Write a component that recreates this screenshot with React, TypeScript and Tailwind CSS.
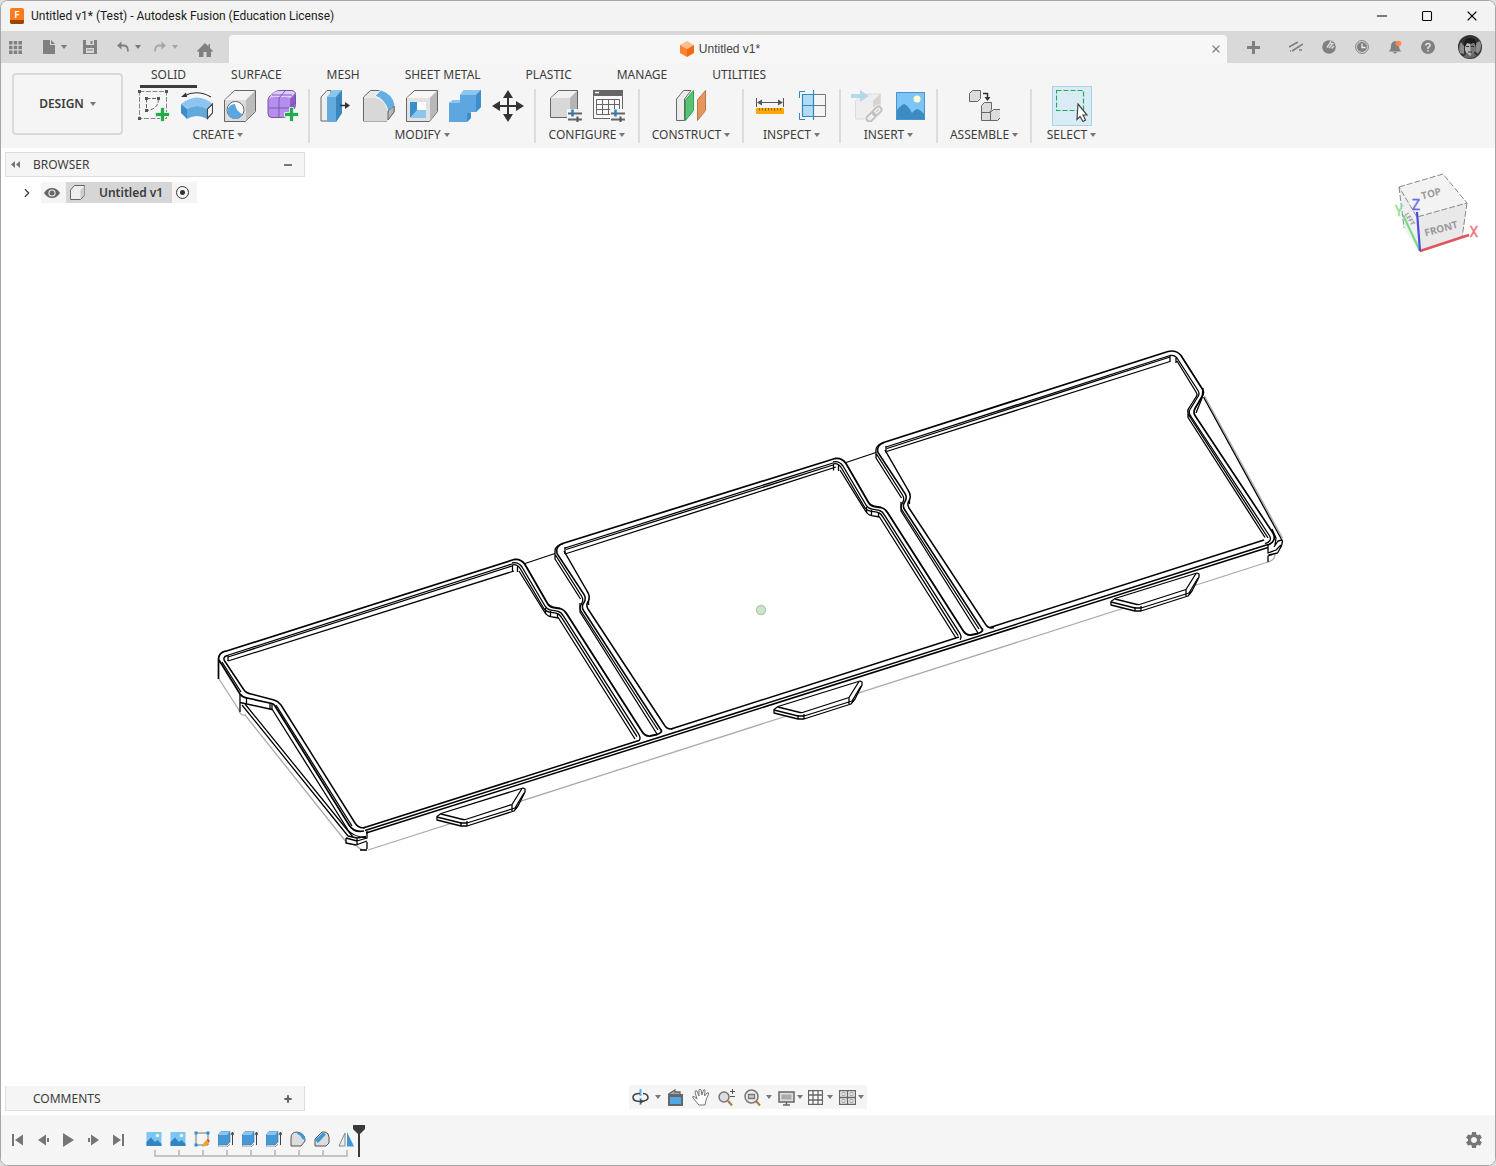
import React from 'react';
import { X, Plus, Minus, Square, ChevronRight } from 'lucide-react';
import { MdSettings } from 'react-icons/md';

interface IconProps {
  className?: string;
}

interface ToolGroup {
  label: string;
  width: string;
  tools: { name: string; icon: React.ReactNode }[];
}

const Caret: React.FC<IconProps> = ({ className = 'text-[#777]' }) => (
  <svg viewBox="0 0 6 4" className={`h-1 w-1.5 shrink-0 ${className}`} aria-hidden="true">
    <path d="M0 0h6L3 4z" fill="currentColor" />
  </svg>
);

const Icon32: React.FC<{ children: React.ReactNode }> = ({ children }) => (
  <svg viewBox="0 0 32 32" className="size-8 shrink-0" fill="none" aria-hidden="true">
    {children}
  </svg>
);

/* ---------- ribbon icons ---------- */

const GreenPlus = () => (
  <path d="M22.500 17.500h4v5h5v4h-5v5h-4v-5h-5v-4h5z" fill="#23ac4c" stroke="#f5f5f5" strokeWidth="0.800" />
);

const SketchIcon = () => (
  <Icon32>
    <path d="M1.500 1.500h27v27h-27z" stroke="#888" strokeDasharray="5 1.500" />
    <path d="M8.500 8.500h12M8.500 8.500v12M20.500 8.500q0 11-12 12" stroke="#666" strokeDasharray="4 1.500" />
    <path d="M0 0h3v3H0zM27 0h3v3h-3zM0 27h3v3H0zM7 7h3v3H7zM19 7h3v3h-3zM7 19h3v3H7z" fill="#555" />
    <GreenPlus />
  </Icon32>
);

const RevolveIcon = () => (
  <Icon32>
    <path d="M3 6Q16-1 30 7" stroke="#333" strokeWidth="1.200" />
    <path d="M0 7l5-4.500 1 4.500z" fill="#333" />
    <path d="M0 14Q16 1 32 14l-6 5q-10-6-20 0z" fill="#8cc6ef" />
    <path d="M0 14l6 5v10l-6-6z" fill="#3a8fcb" />
    <path d="M6 19q10-6 20 0v10q-10-6-20 0z" fill="#60a9dd" />
    <path d="M26.500 19l5-5v9l-5 5.500z" fill="#fff" stroke="#444" strokeWidth="1.200" />
  </Icon32>
);

const HoleIcon = () => (
  <Icon32>
    <path d="M.5 10l10-9.500h21v21l-10 10H.5z" fill="#dcdcdc" stroke="#666" />
    <path d="M1 10L11 1h20l-9.500 9z" fill="#f4f4f4" />
    <path d="M22 10l9-9v20l-9 10z" fill="#bcbcbc" />
    <circle cx="11.500" cy="20" r="8.500" fill="#fff" stroke="#666" />
    <path d="M11 14q1 7 7 10a7.500 7.500 0 1 1-7-10z" fill="#5aa7df" />
  </Icon32>
);

const FormIcon = () => (
  <Icon32>
    <path d="M1 10Q1 7 4 5l4-3q2-1.500 5-1.500h11q4.500 0 4.500 4v10q0 4-3 6l-5 5q-2 2-5 2H5q-4 0-4-4z" fill="#b68df0" stroke="#78559f" />
    <path d="M4 5l4-3q2-1 5-1h11q3 0 4 2l-5 5q-2-1-5-1H7q-3 0-5 2z" fill="#e0cdfb" />
    <path d="M23 9l5-5v11q0 4-3 6l-4 4q2-2 2-6z" fill="#8b5fc4" />
    <path d="M12 8v19M2 18h20l6-6M12 8l6-7M5 5h20" stroke="#7d5aaa" />
    <GreenPlus />
  </Icon32>
);

const PressPullIcon = () => (
  <Icon32>
    <path d="M1 7l6-6.500h4V31H1z" fill="#eee" stroke="#666" />
    <path d="M7 7l6-7h9v23l-6 9H7z" fill="#62aae0" />
    <path d="M7 7l6-7h9l-6 7z" fill="#8cc6ef" />
    <path d="M16 7l6-7v23l-6 9z" fill="#3b86bf" />
    <path d="M20 15.500h7" stroke="#333" strokeWidth="1.500" />
    <path d="M25 12l5 3.500-5 3.500z" fill="#333" />
  </Icon32>
);

const FilletIcon = () => (
  <Icon32>
    <path d="M.5 7l7-6.500H15q11 2 16 15V22l-7 9H.5z" fill="#e9e9e9" stroke="#666" />
    <path d="M1 8h11q10 1 13 13v10H1z" fill="#d8d8d8" />
    <path d="M12 6l6-6q12 4 14 15l-7 6Q22 9 12 6z" fill="#65aee2" stroke="#fff" strokeWidth="0.800" />
    <path d="M25 21l6-5v6l-6 8z" fill="#b9b9b9" stroke="#666" />
  </Icon32>
);

const ShellIcon = () => (
  <Icon32>
    <path d="M.5 8l8-7.500h23v21l-8 10H.5z" fill="#e2e2e2" stroke="#666" />
    <path d="M1 8l8-7h22l-8 7z" fill="#f6f6f6" />
    <path d="M24 8l7-7v20l-7 10z" fill="#b8b8b8" />
    <path d="M4 12h16v16H4z" fill="#fff" />
    <path d="M4 12h7v9l-7 7z" fill="#3a8fcb" />
    <path d="M11 20h9v8H4z" fill="#8cc6ef" />
  </Icon32>
);

const CombineIcon = () => (
  <Icon32>
    <path d="M0 13l4-3h7V5l4-5h17v17l-5 5h-5v6l-4 4H0z" fill="#5da6df" />
    <path d="M11 5l4-5h17l-5 5zM0 13l4-3h7v3z" fill="#8cc6ef" />
    <path d="M27 5l5-5v17l-5 5zM18 23h4v5l-4 4z" fill="#3f8ecb" />
  </Icon32>
);

const MoveIcon = () => (
  <Icon32>
    <path d="M16 4v24M4 16h24" stroke="#333" strokeWidth="2" />
    <path d="M16 0l5 8H11zM16 32l5-8H11zM0 16l8-5v10zM32 16l-8-5v10z" fill="#333" />
  </Icon32>
);

const Sliders = () => (
  <>
    <path d="M17 19h16v14H17z" fill="#f5f5f5" />
    <path d="M18 23.500h14M18 29.500h14" stroke="#666" strokeWidth="1.800" />
    <path d="M22.500 19.500v7" stroke="#1d84c8" strokeWidth="2.500" />
    <path d="M27.500 26.500v6" stroke="#555" strokeWidth="2" />
  </>
);

const ConfigureIcon = () => (
  <Icon32>
    <path d="M.5 8l8-7.500h19v19l-7 8H.5z" fill="#d8d8d8" stroke="#666" />
    <path d="M1 8l8-7h18l-7 7z" fill="#f1f1f1" />
    <path d="M20 8l7-7v19l-7 7z" fill="#b5b5b8" />
    <Sliders />
  </Icon32>
);

const ConfigTableIcon = () => (
  <Icon32>
    <path d="M.5.5h29v28H.5z" fill="#fafafa" stroke="#666" />
    <path d="M0 0h30v6H0z" fill="#666" />
    <path d="M2 2.500h4" stroke="#fff" strokeWidth="1.500" />
    <path d="M3.500 9.500h23v15h-23zM3.500 14.500h23M3.500 19.500h23M9.500 9.500v15M15.500 9.500v15M21.500 9.500v15" stroke="#666" />
    <Sliders />
  </Icon32>
);

const PlaneIcon = () => (
  <Icon32>
    <path d="M1.500 9l7-8.500H16L9.500 9v21.500h-8z" fill="#ececec" stroke="#666" />
    <path d="M10.500 10l8-9.500v20l-8 10z" fill="#57c374" stroke="#35a355" />
    <path d="M22.500 10l8-9.500v20l-8 10z" fill="#e6955d" stroke="#b9784c" />
  </Icon32>
);

const MeasureIcon = () => (
  <Icon32>
    <path d="M2.500 8v9M29.500 8v9M4 12.500h24" stroke="#555" />
    <path d="M3 12.500l5-3v6zM29 12.500l-5-3v6z" fill="#555" />
    <path d="M2 18h28v6H2z" fill="#fba800" />
    <path d="M5.500 18v2.500M8.500 18v2.500M11.500 18v3M14.500 18v2.500M17.500 18v2.500M20.500 18v3M23.500 18v2.500M26.500 18v2.500" stroke="#8e651a" />
  </Icon32>
);

const SectionIcon = () => (
  <Icon32>
    <path d="M5 4h11v22H5z" fill="#b4d9f2" />
    <path d="M16.500 4.500h12v22h-12M16 15.500h12.500" stroke="#777" />
    <path d="M5 4.500h11M5 15.500h11M5 26.500h11M5.500 4v22M16.500 0v30" stroke="#2a8ac4" strokeWidth="1.200" />
    <path d="M8 1.500H2.500V8M8 29.500H2.500V23" stroke="#2a8ac4" />
  </Icon32>
);

const DeriveIcon = () => (
  <Icon32>
    <path d="M4.500 11l8-7h17v17l-7 8h-18z" fill="#eee" stroke="#ddd" />
    <path d="M22 11l7-7v17l-7 8z" fill="#d5d5d5" />
    <path d="M0 4h9V0l9 6-9 6V8H0z" fill="#b6d9ea" />
    <g fill="none" stroke="#f5f5f5" strokeWidth="4">
      <rect x="15" y="24" width="10" height="6" rx="3" transform="rotate(-45 20 27)" />
      <rect x="21" y="18" width="10" height="6" rx="3" transform="rotate(-45 26 21)" />
    </g>
    <g fill="none" stroke="#c2c2c2" strokeWidth="2">
      <rect x="15" y="24" width="10" height="6" rx="3" transform="rotate(-45 20 27)" />
      <rect x="21" y="18" width="10" height="6" rx="3" transform="rotate(-45 26 21)" />
    </g>
  </Icon32>
);

const ImageIcon = () => (
  <Icon32>
    <path d="M2 2h29v28H2z" fill="#7cc5f6" />
    <circle cx="23" cy="9" r="3.500" fill="#fffcd1" />
    <path d="M2 21q5-6 8-7 4 1 8 9 2-3 5-4 4 1 8 6v5H2z" fill="#3c8cc4" />
    <path d="M2.500 2.500h28v27h-28z" stroke="#4c93c8" />
  </Icon32>
);

const AssembleIcon = () => (
  <Icon32>
    <g fill="#dcdcdc" stroke="#666">
      <path d="M1.500 3.500l3-3h8v8l-3 3h-8zM13.500 15.500l3-3h7v7l-2 3h-8zM13.500 22.500h9v8h-9zM22.500 22.500l3-3h7v8l-3 3h-7z" />
    </g>
    <path d="M15 3.500h4.500V8" stroke="#333" strokeWidth="1.500" />
    <path d="M16.500 7h6l-3 4z" fill="#333" />
  </Icon32>
);

const SelectIcon = () => (
  <Icon32>
    <path d="M.5.500h27v20H.5z" stroke="#28a55a" strokeDasharray="5 2" strokeWidth="1.200" />
    <path d="M22 14l9 11h-4l2.500 5-2.500 1.500-3-5-3 3z" fill="#fff" stroke="#444" strokeWidth="1.200" />
  </Icon32>
);

const groups: ToolGroup[] = [
  {
    label: 'CREATE',
    width: 'w-[182px]',
    tools: [
      { name: 'Create Sketch', icon: <SketchIcon /> },
      { name: 'Revolve', icon: <RevolveIcon /> },
      { name: 'Hole', icon: <HoleIcon /> },
      { name: 'Create Form', icon: <FormIcon /> },
    ],
  },
  {
    label: 'MODIFY',
    width: 'w-[226px]',
    tools: [
      { name: 'Press Pull', icon: <PressPullIcon /> },
      { name: 'Fillet', icon: <FilletIcon /> },
      { name: 'Shell', icon: <ShellIcon /> },
      { name: 'Combine', icon: <CombineIcon /> },
      { name: 'Move', icon: <MoveIcon /> },
    ],
  },
  {
    label: 'CONFIGURE',
    width: 'w-[104px]',
    tools: [
      { name: 'Configure', icon: <ConfigureIcon /> },
      { name: 'Configuration Table', icon: <ConfigTableIcon /> },
    ],
  },
  { label: 'CONSTRUCT', width: 'w-[104px]', tools: [{ name: 'Offset Plane', icon: <PlaneIcon /> }] },
  {
    label: 'INSPECT',
    width: 'w-[97px]',
    tools: [
      { name: 'Measure', icon: <MeasureIcon /> },
      { name: 'Section Analysis', icon: <SectionIcon /> },
    ],
  },
  {
    label: 'INSERT',
    width: 'w-[97px]',
    tools: [
      { name: 'Derive', icon: <DeriveIcon /> },
      { name: 'Canvas', icon: <ImageIcon /> },
    ],
  },
  { label: 'ASSEMBLE', width: 'w-[94px]', tools: [{ name: 'New Component', icon: <AssembleIcon /> }] },
  { label: 'SELECT', width: 'w-[79px]', tools: [{ name: 'Select', icon: <SelectIcon /> }] },
];

const ribbonTabs = ['SOLID', 'SURFACE', 'MESH', 'SHEET METAL', 'PLASTIC', 'MANAGE', 'UTILITIES'];

/* ---------- title and document bars ---------- */

const TitleBar = () => (
  <header className="flex h-[30px] items-center bg-[#f3f3f3]">
    <svg viewBox="0 0 14 16" className="ml-[9px] h-4 w-3.5" aria-hidden="true">
      <path d="M2 0h10q2 0 2 2v12q0 2-2 2H2q-2 0-2-2V2q0-2 2-2z" fill="#ff7a1c" />
      <path d="M0 12h14v2q0 2-2 2H2q-2 0-2-2z" fill="#9c4308" />
      <text x="7" y="10" textAnchor="middle" fontSize="9" fontWeight="700" fill="#fff" fontFamily="Roboto, sans-serif">F</text>
    </svg>
    <h1 className="ml-[7px] flex-1 font-['Roboto',sans-serif] text-xs text-[#1a1a1a]">
      Untitled v1* (Test) - Autodesk Fusion (Education License)
    </h1>
    <button aria-label="Minimize" className="flex w-[45px] justify-center text-black">
      <Minus className="size-4" strokeWidth={1.5} />
    </button>
    <button aria-label="Maximize" className="flex w-[45px] justify-center text-black">
      <Square className="size-3" strokeWidth={2.2} />
    </button>
    <button aria-label="Close" className="flex w-[46px] justify-center text-black">
      <X className="size-4" strokeWidth={1.7} />
    </button>
  </header>
);

const UndoArrow: React.FC<IconProps> = ({ className }) => (
  <svg viewBox="0 0 12 12" className={`size-3 ${className}`} fill="none" aria-hidden="true">
    <path d="M2 4.500h5q4 0 4 6" stroke="currentColor" strokeWidth="1.800" />
    <path d="M0 4.500L4.500.5v8z" fill="currentColor" />
  </svg>
);

const DocumentBar = () => (
  <div className="flex h-8 items-stretch bg-[#d9d9d9] text-[#808080]">
    <nav aria-label="Quick access" className="flex w-[228px] shrink-0 items-center pl-2">
      <button aria-label="Data panel">
        <svg viewBox="0 0 13 13" className="size-[13px]" fill="currentColor" aria-hidden="true">
          <path d="M0 0h3.500v3.500H0zM4.700 0h3.500v3.500H4.700zM9.400 0H13v3.500H9.400zM0 4.700h3.500v3.500H0zM4.700 4.700h3.500v3.500H4.700zM9.400 4.700H13v3.500H9.400zM0 9.400h3.500V13H0zM4.700 9.400h3.500V13H4.700zM9.400 9.400H13V13H9.400z" />
        </svg>
      </button>
      <button aria-label="File" className="ml-[21px] flex items-center gap-1.5">
        <svg viewBox="0 0 12 14" className="h-3.5 w-3" fill="currentColor" aria-hidden="true">
          <path d="M0 0h7v5h5v9H0zM8 0l4 4H8z" />
        </svg>
        <Caret />
      </button>
      <button aria-label="Save" className="ml-4">
        <svg viewBox="0 0 14 14" className="size-3.5" fill="currentColor" fillRule="evenodd" aria-hidden="true">
          <path d="M0 0h14v14H0zM3 0v5h8V0zM3 8v5h8V8zM4 9.500h6v1H4zM7.500 1h2v3h-2z" />
        </svg>
      </button>
      <button aria-label="Undo" className="ml-5 flex items-center gap-1.5">
        <UndoArrow />
        <Caret />
      </button>
      <button aria-label="Redo" className="ml-[13px] flex items-center gap-1.5 text-[#a5a5a5]">
        <UndoArrow className="-scale-x-100" />
        <Caret className="text-[#a5a5a5]" />
      </button>
      <button aria-label="Home" className="mt-1.5 ml-[19px]">
        <svg viewBox="0 0 16 14" className="h-3.5 w-4" fill="currentColor" aria-hidden="true">
          <path d="M8 0l3.500 3.500V1H13v4l3 3-1 1-1-.8V14H9.500V9h-3v5H2V8.200L1 9 0 8z" />
        </svg>
      </button>
    </nav>
    <div className="mt-1 flex flex-1 items-center rounded-t bg-[#f7f7f7] pr-[5px]">
      <div className="flex flex-1 items-center justify-center gap-1">
        <svg viewBox="0 0 16 16" className="size-4" aria-hidden="true">
          <path d="M8 0l7 4-7 4-7-4z" fill="#ffbd8d" />
          <path d="M1 4l7 4v8l-7-4z" fill="#fb8232" />
          <path d="M15 4L8 8v8l7-4z" fill="#f26a12" />
        </svg>
        <span className="font-['Liberation_Sans',sans-serif] text-xs text-[#444]">Untitled v1*</span>
      </div>
      <button aria-label="Close document">
        <X className="size-3" strokeWidth={2.5} />
      </button>
    </div>
    <div className="flex w-[268px] shrink-0 items-center">
      <button aria-label="New document" className="ml-5">
        <svg viewBox="0 0 13 13" className="size-[13px]" aria-hidden="true">
          <path d="M6.500 0v13M0 6.500h13" stroke="currentColor" strokeWidth="3" />
        </svg>
      </button>
      <div className="ml-[29px] flex gap-[19px]">
        <button aria-label="Extensions">
          <svg viewBox="0 0 14 14" className="size-3.5" fill="none" stroke="currentColor" strokeWidth="1.700" aria-hidden="true">
            <path d="M0 7l9-5M3 11l11-7M1 11h1M10 10h3" />
          </svg>
        </button>
        <button aria-label="Updates">
          <svg viewBox="0 0 14 14" className="size-3.5" aria-hidden="true">
            <circle cx="7" cy="7" r="6.800" fill="currentColor" />
            <path d="M5 7.500l3-4.500 3.500 1M7 8l3-3.500M9.500 8.500L12 6M8 3l1-2" stroke="#d9d9d9" strokeWidth="1.500" fill="none" />
          </svg>
        </button>
        <button aria-label="Job status">
          <svg viewBox="0 0 14 14" className="size-3.5" aria-hidden="true">
            <circle cx="7" cy="7" r="6.400" fill="none" stroke="currentColor" />
            <circle cx="7" cy="7" r="5" fill="currentColor" />
            <path d="M7 3.500V7.500h3.500" stroke="#eee" strokeWidth="1.300" fill="none" />
          </svg>
        </button>
        <button aria-label="Notifications">
          <svg viewBox="0 0 14 14" className="size-3.5" aria-hidden="true">
            <path d="M1 11.500q2-2 2-5.500 0-4 4-5 4 1 4 5 0 3.500 2 5.500zM5 12h4q-2 3-4 0z" fill="currentColor" />
            <circle cx="10.500" cy="3.500" r="2.800" fill="#ff8a50" />
          </svg>
        </button>
        <button aria-label="Help">
          <svg viewBox="0 0 14 14" className="size-3.5" aria-hidden="true">
            <circle cx="7" cy="7" r="7" fill="currentColor" />
            <path d="M4.800 5.500Q5 3.500 7 3.500t2.200 1.800Q9.200 6.500 7 7.500V9M7 10v1.500" stroke="#e4e4e4" strokeWidth="1.500" fill="none" />
          </svg>
        </button>
      </div>
      <button aria-label="Account" className="ml-[23px]">
        <svg viewBox="0 0 24 24" className="size-6" aria-hidden="true">
          <circle cx="12" cy="12" r="12" fill="#333" />
          <path d="M2 18Q0 12 3 7l3 4v8zM18 8l4-2q3 7-2 13l-3-3z" fill="#8b8b8b" />
          <path d="M7 9q5-4 10 0v6q-2 6-5 6t-5-6z" fill="#b5b5b5" />
          <path d="M6 10Q6 2 13 3q6 0 5 8l-2-3-3 1-4-1-2 4z" fill="#1c1c1c" />
          <path d="M12 9h5v6q-2 5-4 5z" fill="#777" />
          <path d="M8 11.500h3M13 11.500h3M10 17h4" stroke="#333" strokeWidth="1.200" />
          <path d="M5 22l4-4 3 3 4-3 3 3q-7 4-14 1z" fill="#666" />
        </svg>
      </button>
    </div>
  </div>
);

/* ---------- ribbon ---------- */

const Ribbon = () => (
  <div className="flex bg-[#f5f5f5] text-[#3c3c3c]">
    <button className="mt-2.5 ml-[11px] flex h-[62px] w-[111px] shrink-0 items-center justify-center gap-1.5 rounded border-2 border-[#dadada] text-xs font-semibold">
      DESIGN
      <Caret />
    </button>
    <div className="ml-[5px] flex-1">
      <nav aria-label="Ribbon tabs" className="flex gap-[23px] pl-3">
        {ribbonTabs.map((tab, i) => (
          <button
            key={tab}
            className={`border-b-[3px] px-[11px] pt-1 pb-0.5 text-xs leading-4 whitespace-nowrap ${
              i === 0 ? 'border-[#3c3c3c]' : 'border-transparent'
            }`}
          >
            {tab}
          </button>
        ))}
      </nav>
      <div className="flex pt-px pb-[5px]">
        {groups.map((group, i) => (
          <section
            key={group.label}
            className={`flex shrink-0 flex-col items-center gap-[5px] pt-px ${group.width} ${
              i < groups.length - 1 ? 'border-r-2 border-[#dcdcdc]' : ''
            }`}
          >
            <div className="flex gap-[11px]">
              {group.tools.map((tool) => (
                <button
                  key={tool.name}
                  aria-label={tool.name}
                  className={group.label === 'SELECT' ? '-m-1 border border-[#a9d3e6] bg-[#d9ecf5] p-[3px]' : ''}
                >
                  {tool.icon}
                </button>
              ))}
            </div>
            <button className="flex items-center gap-[3px] text-xs leading-4">
              {group.label}
              <Caret />
            </button>
          </section>
        ))}
      </div>
    </div>
  </div>
);

/* ---------- model ---------- */

const FrontTab = () => (
  <g>
    <path d="M437 820v-3.500l4-3 82-25.500 2 1v3l-7 14-4 5-47 15h-6z" fill="#fff" />
    <path d="M441 814l22 5.500q2 .5 4-.5l45-14.500 10-16" />
    <path d="M437 817l24 6h6l48-15 9-15M461 822v4M467 821v5M512 805v6M516 806v3" />
  </g>
);

// the divider between two neighbouring trays
const Divider = () => (
  <g>
    <path d="M525 563.500l30-10" />
    <path strokeWidth="1.800" d="M514 559.500q7-1 11 5l22.500 39q2 3.500 6 4l6.500 1q4 1 6.500 5l75.500 118q3 5 8 4.500l7-1.500q6-2 4-5" />
    <path d="M512 563q6-1.500 10 4l23 39q2 3.500 6 4.200l6.500 1q4 1 6 5l75.500 118.500q2 4 0 6" />
    <path d="M512 565q5-1.500 8.500 4l23 39q2 3.500 6 4.200l6.500 1q4 1 6 5l75 118.500" />
    <path d="M519 571l25.500 41q2.500 4 6 4.700l8 1.300L635 739" />
    <path d="M512.500 565v6.500M517.500 566v6M545.500 608v5M550.500 611v6M557.500 613v5" />
    <path strokeWidth="1.500" d="M564 551l23 40q3.500 5 1.500 10-3 4-.5 8l77 117q3 4 8 2.500" />
    <path strokeWidth="1.500" d="M563 543.500q-8 3-6 10l27 41q2.500 4 0 8-3 4-.5 8L661 730" />
    <path d="M561 544q-7 3-6 9v6l25.500 40M555.500 555l26 41q2.500 4 0 8-2.500 3-.5 7L658 730" />
    <path d="M580 603v9l77 122M588.500 600v5" />
  </g>
);

const Model = () => (
  <svg
    viewBox="1 148 1494 967"
    className="absolute inset-0 h-full w-full"
    fill="none"
    stroke="#000"
    strokeWidth="1.300"
    strokeLinejoin="round"
    role="img"
    aria-label="Wireframe of a three-compartment tray"
  >
    <g stroke="#aaa">
      <path d="M368 850l900-288q7-2 7-8" />
      <path d="M219 679l20 31q1 6 7 5M245 715l102 128M356 845q5 6 10 5" />
      <path d="M1204.500 396l78 142" />
    </g>

    {/* back edges of the three trays */}
    <path strokeWidth="1.700" d="M225 651.500L514 559.500M561 544L835 458.500M882 443L1168 351.500" />
    <path d="M227 655.500L512 564M228 657L512 566M228 661L514 571" />
    <path d="M565 548L833 463M566 549.500L833 465M565 554L836 467" />
    <path d="M886 447L1170 355.500M887 448.500L1170 357M885 452L1170 361.500" />
    <path d="M228 655v6M565 547v7M886 446v6" />

    <Divider />
    <g transform="translate(321 -101)">
      <Divider />
    </g>

    {/* front wall */}
    <path strokeWidth="1.500" d="M365 830.500L1268 544.500M366 833L1268 547.500" />
    <path strokeWidth="1.500" d="M363 828L639 740.500M671 729L959 637M990 627.500L1264 540" />

    {/* left end */}
    <path d="M218.500 679v-20q0-6 7-8M219 660l21 34q2 3 7 4l25 5.500q2 .5 3 2.500l74 119q5 8 15 6" strokeWidth="1.700" />
    <path d="M227 655.500q-5 2-2 6L244 690q2 3 7 4l23 6q4 1 7 5l74 118q4 6 10 4.500" strokeWidth="1.500" />
    <path d="M222 662l19 30M276 705l76 121M272 709l76 121q4 6 18 8M240 694v8.500l7 1.500 25 5.500v-6M246.500 697v6.500M270 703v6" />
    <path d="M240 703v9M242 705L348 836l9 2 9-1.500M245 704L353 837M346 838v5l10 2 11-4M346 838l11 3 10-3M357 838v6" />
    <path d="M367 831v7.500M367 842v7M360 850h7" />

    {/* right end */}
    <path d="M1168 351.500q8-2 13 4l21 33q3 4 0 8l-7 12q-2 4 0 7L1273 533q4 8-5 12" strokeWidth="1.700" />
    <path d="M1170 355.500q5-1 8 4l20 31q2 3 0 6l-8 13q-2 3 1 7l79 120q2 5-5 7" />
    <path d="M1177 361l19 31q2 3 0 5l-7 11q-3 4 1 9l78 121M1188 409v8.500l77 120M1170 356v6M1176 358v5" />
    <path d="M1203 388l-1 10-6 15M1203.500 397L1278 533l4.500 8-1 5-4 7-9 2M1272 529l4 9-1 7M1274 547l4-6 4-1M1268 545v8l8-3 5-5M1268 562v-6l9-3" />

    <FrontTab />
    <g transform="translate(337 -107)">
      <FrontTab />
    </g>
    <g transform="translate(674 -215)">
      <FrontTab />
    </g>
    <circle cx="761" cy="610" r="4.500" fill="#cbe6c9" stroke="#b5c6b4" />
  </svg>
);

const ViewCube = () => (
  <svg viewBox="1388 168 94 96" className="mt-4 mr-[13px] h-24 w-[94px] shrink-0" fill="none" role="img" aria-label="View cube">
    <path d="M1399 187l44-13 24 29-50 14z" fill="#f3f3f3" />
    <path d="M1417 217l50-14-5 35-42 14z" fill="#e9e9e9" />
    <path d="M1399 187l18 30 3 35-16-24z" fill="#efefef" />
    <path d="M1399 187l44-13 24 29-50 14zM1399 187l5 41M1467 203l-5 35" stroke="#888" strokeDasharray="6 2" />
    <g fontFamily="Open Sans, sans-serif" fontWeight="700" fontSize="10" fill="#999" textAnchor="middle">
      <text transform="translate(1432 197) rotate(-14)">TOP</text>
      <text transform="translate(1442 232) rotate(-15)">FRONT</text>
      <text transform="translate(1408 220) rotate(60)" fontSize="6">LEFT</text>
    </g>
    <path d="M1420 251l-17-36" stroke="#6fdc7c" strokeWidth="2" />
    <path d="M1420 251l49-16" stroke="#e0545a" strokeWidth="2.500" />
    <path d="M1420 251l-3-39" stroke="#4a4ce0" strokeWidth="2.200" />
    <g fontFamily="Roboto, sans-serif" fontSize="14" textAnchor="middle" strokeWidth="0.400">
      <text x="1416" y="210" fill="#6a6cf0" stroke="#6a6cf0">Z</text>
      <text x="1399" y="216" fill="#8be495" stroke="#8be495">Y</text>
      <text x="1474" y="237" fill="#f0777c" stroke="#f0777c">X</text>
    </g>
  </svg>
);

/* ---------- canvas overlays ---------- */

const BrowserPanel = () => (
  <section className="w-[300px] text-xs text-[#3c3c3c]">
    <header className="flex h-[25px] items-center border border-[#ddd] bg-[#f5f5f5] pr-3 pl-[5px]">
      <button aria-label="Collapse browser">
        <svg viewBox="0 0 9 7" className="h-[7px] w-[9px]" fill="#777" aria-hidden="true">
          <path d="M4 0v7L0 3.500zM9 0v7L5 3.500z" />
        </svg>
      </button>
      <h2 className="ml-[13px] flex-1">BROWSER</h2>
      <button aria-label="Minimize browser" className="h-0.5 w-2 bg-[#777]" />
    </header>
    <div className="mt-[5px] flex h-[21px] items-center">
      <button aria-label="Expand" className="ml-[15px]">
        <ChevronRight className="size-3.5" />
      </button>
      <div className="ml-[7px] flex h-full items-center bg-[#f5f5f5]">
        <button aria-label="Toggle visibility" className="ml-[3px]">
          <svg viewBox="0 0 16 12" className="h-3 w-4" aria-hidden="true">
            <path d="M0 6Q3 1 8 1t8 5q-3 5-8 5T0 6z" fill="#666" />
            <circle cx="8" cy="6" r="3.600" fill="#f5f5f5" />
            <circle cx="8" cy="6" r="2.500" fill="#666" />
          </svg>
        </button>
        <button className="ml-1.5 flex h-full items-center gap-3.5 bg-[#d6d6d6] pr-[9px] pl-1 font-semibold">
          <svg viewBox="0 0 15 15" className="size-[15px]" fill="#eee" stroke="#666" aria-hidden="true">
            <path d="M.5 5l4-4.500h10v10l-4 4H.5z" />
            <path d="M10.500 5l4-4v9l-4 4z" fill="#ccc" stroke="none" />
          </svg>
          Untitled v1
        </button>
        <input
          type="radio"
          defaultChecked
          aria-label="Activate component"
          className="mr-2 ml-1 size-[13px] appearance-none rounded-full border border-[#333] bg-[radial-gradient(circle,#333_0_2px,transparent_3px)]"
        />
      </div>
    </div>
  </section>
);

const NavBar = () => (
  <div className="mb-0.5 flex h-6 items-center bg-[#f5f5f5] px-[3px]" role="toolbar" aria-label="Navigation">
    <button aria-label="Orbit" className="flex items-center gap-1.5">
      <svg viewBox="0 0 17 17" className="size-[17px]" fill="none" aria-hidden="true">
        <path d="M8.500 0v17" stroke="#62b0e8" strokeWidth="2" strokeDasharray="7 2" />
        <path d="M11 4.500q5 .5 5 4t-7.500 4Q1 12.500 1 8.500t7-4" stroke="#444" strokeWidth="1.600" />
        <path d="M8 10l4 2.500L8 15z" fill="#444" />
      </svg>
      <Caret />
    </button>
    <button aria-label="Look at" className="ml-1.5">
      <svg viewBox="0 0 17 17" className="size-[17px]" fill="none" aria-hidden="true">
        <path d="M1 5h15v12H1z" fill="#666" />
        <path d="M3 8h11v7H3z" fill="#4fa8e5" />
        <path d="M1.500 5L8 1v2h5v2" fill="#aaa" stroke="#666" strokeWidth="1.300" />
      </svg>
    </button>
    <button aria-label="Pan" className="ml-2">
      <svg viewBox="0 0 18 18" className="size-[18px]" fill="#fff" stroke="#777" aria-hidden="true">
        <path d="M6 16L1 10q-1-2 1-1.500L5 11 3 4q0-2 2-1l2 5L7 2q1-2 2 0l1 5 1.500-5q1.500-1 1.500 1l-.5 5L15 5q2-1 1.500 1L14 12l-1 5H7z" />
      </svg>
    </button>
    <button aria-label="Zoom" className="ml-2">
      <svg viewBox="0 0 17 17" className="size-[17px]" fill="none" aria-hidden="true">
        <circle cx="6" cy="8" r="5" fill="#ddd" stroke="#777" strokeWidth="1.500" />
        <path d="M10 12l4 4.500" stroke="#b07336" strokeWidth="2" />
        <path d="M14.500 0v5M12 2.500h5M12 7.500h5" stroke="#555" />
      </svg>
    </button>
    <button aria-label="Fit" className="ml-[9px] flex items-center gap-[5px]">
      <svg viewBox="0 0 17 17" className="size-[17px]" fill="none" aria-hidden="true">
        <circle cx="7.500" cy="7.500" r="6.500" fill="#eee" stroke="#777" strokeWidth="1.500" />
        <path d="M4.500 5.500h6v4h-6z" fill="#ccc" stroke="#777" strokeWidth="1.300" />
        <path d="M12 12l4 4.500" stroke="#b07336" strokeWidth="2" />
      </svg>
      <Caret />
    </button>
    <button aria-label="Display settings" className="ml-1.5 flex items-center gap-0.5">
      <svg viewBox="0 0 17 17" className="size-[17px]" fill="none" aria-hidden="true">
        <path d="M1 3h15v10H1z" fill="#ddd" stroke="#666" strokeWidth="1.500" />
        <path d="M3.500 5.500h10v5h-10z" fill="#aaa" />
        <path d="M8.500 13v2.500M5 16h7" stroke="#666" strokeWidth="1.500" />
      </svg>
      <Caret />
    </button>
    <button aria-label="Grid and snaps" className="ml-[5px] flex items-center gap-1">
      <svg viewBox="0 0 15 15" className="size-[15px]" fill="#fff" stroke="#666" strokeWidth="1.300" aria-hidden="true">
        <path d="M.5.500h14v14H.5zM5 .5v14M10 .5v14M.5 5h14M.5 10h14" />
      </svg>
      <Caret />
    </button>
    <button aria-label="Viewports" className="ml-1.5 flex items-center gap-0.5">
      <svg viewBox="0 0 17 15" className="h-[15px] w-[17px]" fill="#eee" stroke="#666" strokeWidth="1.300" aria-hidden="true">
        <path d="M.5.500h16v14H.5zM8.500.500v14M.5 7.500h16" />
        <path d="M3 2.500h3v3H3zM11 2.500h3v3h-3zM3 9.500h3v3H3zM11 9.500h3v3h-3z" stroke="#aaa" strokeWidth="1" />
      </svg>
      <Caret />
    </button>
  </div>
);

/* ---------- timeline ---------- */

const CanvasFeature = () => (
  <>
    <path d="M.5 1h15v14H.5z" fill="#7cc5f6" />
    <circle cx="11.500" cy="4.500" r="1.700" fill="#fffcd1" />
    <path d="M.5 11L5 6.500 9 11l2.500-2 4 4v2H.5z" fill="#3285c0" />
  </>
);

const SketchFeature = () => (
  <>
    <path d="M2 2h12v12H2z" fill="none" stroke="#777" />
    <path d="M.5.500h3v3h-3zM12.500.500h3v3h-3zM.5 12.500h3v3h-3z" fill="#2f8fd0" />
    <path d="M8 16l1.500-4 3-3 2.500 2.500-3 3z" fill="#f6a31c" />
    <path d="M12.500 9l1.500-1 2 2-1 1.500z" fill="#e04d3c" />
  </>
);

const ExtrudeFeature = () => (
  <>
    <path d="M0 12v4h9l3-3" fill="none" stroke="#999" />
    <path d="M0 4l3-3.500h9V11l-3 3H0z" fill="#4799d5" stroke="#3378a8" strokeWidth="0.600" />
    <path d="M0 4l3-3.500h9L9 4z" fill="#8cc6ef" />
    <path d="M14.500 14V2M13 4l1.500-3L16 4" fill="none" stroke="#444" />
  </>
);

const FilletFeature = () => (
  <>
    <path d="M1 15V7q0-6 6-6 8 1 8 9l-4 5z" fill="#ddd" stroke="#555" />
    <path d="M8 1q7 1 7.500 8L12 8q-1-4-5-5z" fill="#3f97d6" />
  </>
);

const ChamferFeature = () => (
  <>
    <path d="M1 15V8l7-7h3q4 1 4 5v6l-3 3z" fill="#ddd" stroke="#555" />
    <path d="M1 9l8-7.500 3 2L4 12z" fill="#3f97d6" />
  </>
);

const MirrorFeature = () => (
  <>
    <path d="M7 2v13H1z" fill="#eee" stroke="#888" />
    <path d="M9 1v14.500h7z" fill="#3f97d6" />
  </>
);

const features = [
  { name: 'Canvas 1', icon: <CanvasFeature /> },
  { name: 'Canvas 2', icon: <CanvasFeature /> },
  { name: 'Sketch', icon: <SketchFeature /> },
  { name: 'Extrude 1', icon: <ExtrudeFeature /> },
  { name: 'Extrude 2', icon: <ExtrudeFeature /> },
  { name: 'Extrude 3', icon: <ExtrudeFeature /> },
  { name: 'Fillet', icon: <FilletFeature /> },
  { name: 'Chamfer', icon: <ChamferFeature /> },
  { name: 'Mirror', icon: <MirrorFeature /> },
];

const playback = [
  { name: 'Go to start', d: 'M0 1h2v12H0zM11 1.500v11L3 7z' },
  { name: 'Step back', d: 'M9 1.500v11L1 7zM10 5h2v4h-2z' },
  { name: 'Play', d: 'M1 0l11 7-11 7z' },
  { name: 'Step forward', d: 'M4 1.500v11L12 7zM1 5h2v4H1z' },
  { name: 'Go to end', d: 'M10 1h2v12h-2zM1 1.500v11L9 7z' },
];

const Timeline = () => (
  <footer className="flex h-[50px] items-start bg-[#f5f5f5]">
    <div className="mt-[18px] ml-[11px] flex gap-[13px]">
      {playback.map((item) => (
        <button key={item.name} aria-label={item.name}>
          <svg viewBox="0 0 12 14" className="h-3.5 w-3" fill="#757575" aria-hidden="true">
            <path d={item.d} />
          </svg>
        </button>
      ))}
    </div>
    <ol className="mt-4 ml-[18px] flex">
      {features.map((feature, i) => (
        <li key={feature.name} className="w-6">
          <button aria-label={feature.name} className="mx-auto block">
            <svg viewBox="0 0 16 16" className="size-4" aria-hidden="true">
              {feature.icon}
            </svg>
          </button>
          <svg viewBox="0 0 24 8" className="mt-[3px] h-2 w-6" stroke="#c4c4c4" strokeWidth="2" aria-hidden="true">
            <path d={i === 0 ? 'M13 0v6M12 6h12' : i === features.length - 1 ? 'M13 0v6M0 6h14' : 'M13 0v6M0 6h24'} />
          </svg>
        </li>
      ))}
    </ol>
    <button aria-label="Timeline marker" className="mt-2.5 -ml-[5px]">
      <svg viewBox="0 0 12 32" className="h-8 w-3" fill="#3a3a3a" aria-hidden="true">
        <path d="M0 0h12v4L7 9v23H5V9L0 4z" />
      </svg>
    </button>
    <button aria-label="Timeline settings" className="mt-[15px] mr-[11px] ml-auto text-[#777]">
      <MdSettings className="size-5" />
    </button>
  </footer>
);

const App: React.FC = () => {
  return (
    <div className="min-h-screen bg-[#ddd]">
      <div className="flex min-h-screen flex-col overflow-hidden rounded-lg border border-[#a6a6a6] bg-white font-['Noto_Sans',sans-serif]">
        <TitleBar />
        <DocumentBar />
        <Ribbon />
        <main className="relative flex flex-1 flex-col justify-between">
          <Model />
          <div className="relative flex items-start justify-between pt-1 pl-1">
            <BrowserPanel />
            <ViewCube />
          </div>
          <div className="relative grid grid-cols-[1fr_auto_1fr] items-end pb-1">
            <div className="ml-1 flex h-[25px] w-[300px] items-center border border-t-0 border-[#ddd] bg-[#f5f5f5] pt-0.5 pr-[11px] pl-[27px] text-xs text-[#3c3c3c]">
              <h2 className="flex-1">COMMENTS</h2>
              <button aria-label="Expand comments">
                <Plus className="size-2.5 text-[#666]" strokeWidth={5} />
              </button>
            </div>
            <NavBar />
          </div>
        </main>
        <Timeline />
      </div>
    </div>
  );
};

export default App;
